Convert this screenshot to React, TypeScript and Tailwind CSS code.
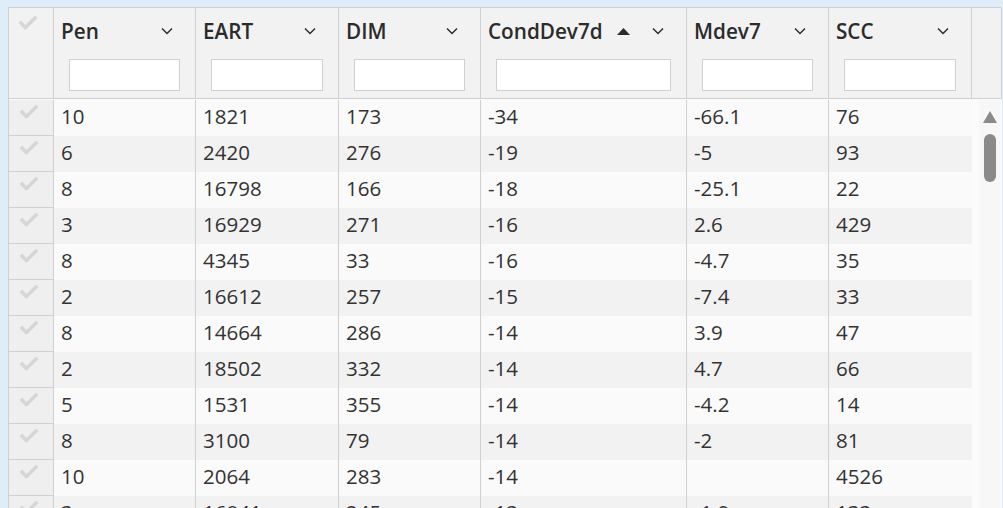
import React from "react";

const rows: string[][] = [
  ["10", "1821", "173", "-34", "-66.1", "76"],
  ["6", "2420", "276", "-19", "-5", "93"],
  ["8", "16798", "166", "-18", "-25.1", "22"],
  ["3", "16929", "271", "-16", "2.6", "429"],
  ["8", "4345", "33", "-16", "-4.7", "35"],
  ["2", "16612", "257", "-15", "-7.4", "33"],
  ["8", "14664", "286", "-14", "3.9", "47"],
  ["2", "18502", "332", "-14", "4.7", "66"],
  ["5", "1531", "355", "-14", "-4.2", "14"],
  ["8", "3100", "79", "-14", "-2", "81"],
  ["10", "2064", "283", "-14", "", "4526"],
  ["3", "16841", "245", "-13", "-1.9", "133"],
];

const cols = [
  { name: "Pen", w: "w-[142px]" },
  { name: "EART", w: "w-[143px]" },
  { name: "DIM", w: "w-[142px]" },
  { name: "CondDev7d", w: "w-[206px]", sort: true },
  { name: "Mdev7", w: "w-[142px]" },
  { name: "SCC", w: "w-[143px]" },
];

function Check() {
  return (
    <svg width="18" height="14" viewBox="0 0 18 14">
      <path d="M2 7 L6.5 11.5 L16 2" fill="none" stroke="#d6d6d6" strokeWidth="3.6" strokeLinecap="square" />
    </svg>
  );
}

function Chevron() {
  return (
    <svg width="12" height="8" viewBox="0 0 12 8">
      <path d="M1 1.5 L6 6.5 L11 1.5" fill="none" stroke="#2d2d2d" strokeWidth="1.5" />
    </svg>
  );
}

export default function App() {
  return (
    <div
      className="w-[1003px] h-[508px] overflow-hidden bg-[#dfedfa] pt-[7px] pl-[8px]"
      style={{ fontFamily: '"Open Sans", "Liberation Sans", sans-serif' }}
    >
      <div className="w-[993px] border-l border-t border-[#d0d0d0] bg-[#fafafa]">
        {/* header */}
        <div className="flex h-[91px] bg-[#f2f2f2] border-b border-[#d0d0d0]">
          <div className="w-[45px] shrink-0 border-r border-[#d0d0d0] pl-[10px] pt-[8px]">
            <Check />
          </div>
          {cols.map((c) => (
            <div key={c.name} className={`${c.w} shrink-0 border-r border-[#d0d0d0] flex flex-col`}>
              <div className="flex items-center h-[28px] mt-[9px] pl-[7px] pr-[22px]">
                <span className="text-[20.7px] leading-[28px] font-semibold text-[#2b2b2b]">{c.name}</span>
                {c.sort && (
                  <svg className="ml-[14px]" width="13" height="7" viewBox="0 0 13 7">
                    <path d="M0 7 L6.5 0 L13 7 Z" fill="#2b2b2b" />
                  </svg>
                )}
                <span className="ml-auto">
                  <Chevron />
                </span>
              </div>
              <div className="px-[15px] mt-[14px]">
                <div className="h-[32px] bg-white border border-[#d0d0d0]" />
              </div>
            </div>
          ))}
          <div className="w-[30px] shrink-0 border-r border-[#d0d0d0]" />
        </div>
        {/* body */}
        <div className="flex mt-[1px]">
          <div className="flex flex-col">
            {rows.map((r, i) => (
              <div key={i} className={`flex h-[36px] ${i % 2 === 0 ? "bg-[#fafafa]" : "bg-[#f2f2f2]"}`}>
                <div className="w-[45px] shrink-0 bg-[#efefef] border-r border-b border-[#d0d0d0] pl-[11px] pt-[5px]">
                  <Check />
                </div>
                {r.map((v, j) => (
                  <div
                    key={j}
                    className={`${cols[j].w} shrink-0 pl-[7px] text-[20.5px] leading-[32px] text-[#333333] ${
                      j < 5 ? "border-r border-[#d0d0d0]" : ""
                    }`}
                  >
                    {v}
                  </div>
                ))}
              </div>
            ))}
          </div>
          <div className="w-[30px] shrink-0 flex bg-[#fbfbfb]">
            <div className="w-[7px]" />
            <div className="w-[22px] h-[420px] bg-[#f7f7f7] flex flex-col items-center pt-[11px]">
              <svg width="14" height="12" viewBox="0 0 14 12">
                <path d="M0 12 L7 0 L14 12 Z" fill="#8a8a8a" />
              </svg>
              <div className="w-[12px] h-[48px] rounded-full bg-[#8a8a8a] mt-[11px]" />
            </div>
          </div>
        </div>
      </div>
    </div>
  );
}
